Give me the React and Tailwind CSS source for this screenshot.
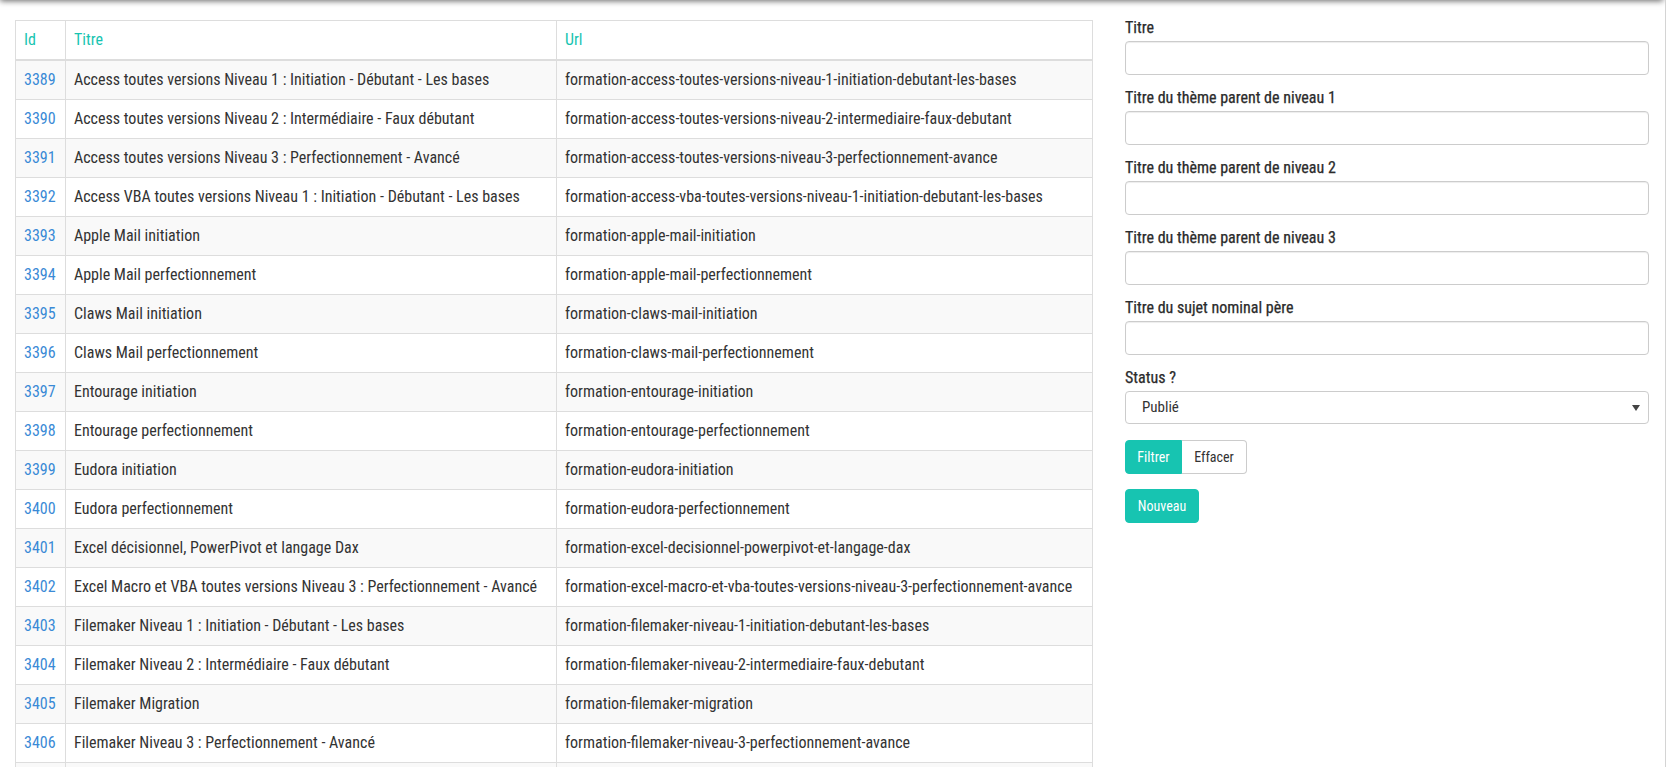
import React from "react";

const rows = [
  ["3389", "Access toutes versions Niveau 1 : Initiation - Débutant - Les bases", "formation-access-toutes-versions-niveau-1-initiation-debutant-les-bases"],
  ["3390", "Access toutes versions Niveau 2 : Intermédiaire - Faux débutant", "formation-access-toutes-versions-niveau-2-intermediaire-faux-debutant"],
  ["3391", "Access toutes versions Niveau 3 : Perfectionnement - Avancé", "formation-access-toutes-versions-niveau-3-perfectionnement-avance"],
  ["3392", "Access VBA toutes versions Niveau 1 : Initiation - Débutant - Les bases", "formation-access-vba-toutes-versions-niveau-1-initiation-debutant-les-bases"],
  ["3393", "Apple Mail initiation", "formation-apple-mail-initiation"],
  ["3394", "Apple Mail perfectionnement", "formation-apple-mail-perfectionnement"],
  ["3395", "Claws Mail initiation", "formation-claws-mail-initiation"],
  ["3396", "Claws Mail perfectionnement", "formation-claws-mail-perfectionnement"],
  ["3397", "Entourage initiation", "formation-entourage-initiation"],
  ["3398", "Entourage perfectionnement", "formation-entourage-perfectionnement"],
  ["3399", "Eudora initiation", "formation-eudora-initiation"],
  ["3400", "Eudora perfectionnement", "formation-eudora-perfectionnement"],
  ["3401", "Excel décisionnel, PowerPivot et langage Dax", "formation-excel-decisionnel-powerpivot-et-langage-dax"],
  ["3402", "Excel Macro et VBA toutes versions Niveau 3 : Perfectionnement - Avancé", "formation-excel-macro-et-vba-toutes-versions-niveau-3-perfectionnement-avance"],
  ["3403", "Filemaker Niveau 1 : Initiation - Débutant - Les bases", "formation-filemaker-niveau-1-initiation-debutant-les-bases"],
  ["3404", "Filemaker Niveau 2 : Intermédiaire - Faux débutant", "formation-filemaker-niveau-2-intermediaire-faux-debutant"],
  ["3405", "Filemaker Migration", "formation-filemaker-migration"],
  ["3406", "Filemaker Niveau 3 : Perfectionnement - Avancé", "formation-filemaker-niveau-3-perfectionnement-avance"],
];

const labels = [
  "Titre",
  "Titre du thème parent de niveau 1",
  "Titre du thème parent de niveau 2",
  "Titre du thème parent de niveau 3",
  "Titre du sujet nominal père",
];

export default function App() {
  return (
    <div className="relative h-[767px] w-[1666px] overflow-hidden border-r border-[#d4d4d4] bg-white font-['Roboto_Condensed','Liberation_Sans_Narrow','DejaVu_Sans_Condensed',Roboto,sans-serif] text-[16px] text-[#333]">
      <div className="absolute -top-[40px] left-0 h-[40px] w-[1663px] bg-white shadow-[0_1px_6px_rgba(0,0,0,0.6)]" />
      <div className="flex gap-[32px] pl-[15px] pt-[20px]">
        <div className="w-[1078px] shrink-0">
          <table className="w-full border-collapse border border-[#ddd] leading-[22px]">
            <thead>
              <tr className="text-[#17c4b1]">
                <th className="w-[50px] border border-b-2 border-[#ddd] px-2 py-2 text-left font-normal">Id</th>
                <th className="w-[491px] border border-b-2 border-[#ddd] px-2 py-2 text-left font-normal">Titre</th>
                <th className="border border-b-2 border-[#ddd] px-2 py-2 text-left font-normal">Url</th>
              </tr>
            </thead>
            <tbody>
              {rows.map((r, i) => (
                <tr key={r[0]} className={i % 2 === 0 ? "bg-[#f9f9f9]" : "bg-white"}>
                  <td className="border border-[#ddd] px-2 py-2 text-[#3a8ad6]">{r[0]}</td>
                  <td className="whitespace-nowrap border border-[#ddd] px-2 py-2">{r[1]}</td>
                  <td className="whitespace-nowrap border border-[#ddd] px-2 py-2">{r[2]}</td>
                </tr>
              ))}
              <tr className="bg-[#f9f9f9]">
                <td className="h-[39px] border border-[#ddd] px-2 py-2"></td>
                <td className="border border-[#ddd] px-2 py-2"></td>
                <td className="border border-[#ddd] px-2 py-2"></td>
              </tr>
            </tbody>
          </table>
        </div>
        <div className="-mt-[5px] w-[524px] shrink-0">
          {labels.map((l) => (
            <div key={l} className="mb-[10px] pt-[2px]">
              <div className="mb-[2px] leading-[22px] text-[#2b2b2b] [-webkit-text-stroke:0.25px_#2b2b2b]">{l}</div>
              <div className="h-[34px] rounded-[4px] border border-[#ccc] bg-white shadow-[inset_0_1px_1px_rgba(0,0,0,0.075)]" />
            </div>
          ))}
          <div className="mb-[16px] pt-[2px]">
            <div className="mb-[2px] leading-[22px] text-[#2b2b2b] [-webkit-text-stroke:0.25px_#2b2b2b]">Status ?</div>
            <div className="flex h-[33px] items-center justify-between rounded-[4px] border border-[#ccc] bg-white pl-[16px] pr-[8px] text-[15px]">
              <span>Publié</span>
              <svg width="8" height="6" viewBox="0 0 8 6"><path d="M0 0h8L4 6z" fill="#444" /></svg>
            </div>
          </div>
          <div className="flex">
            <button className="h-[34px] w-[57px] rounded-l-[4px] border border-[#17c4b1] bg-[#17c4b1] text-[14px] text-white">Filtrer</button>
            <button className="h-[34px] w-[65px] rounded-r-[4px] border border-l-0 border-[#ccc] bg-white text-[14px] text-[#333]">Effacer</button>
          </div>
          <button className="mt-[15px] h-[34px] w-[74px] rounded-[4px] border border-[#17c4b1] bg-[#17c4b1] text-[14px] text-white">Nouveau</button>
        </div>
      </div>
    </div>
  );
}
